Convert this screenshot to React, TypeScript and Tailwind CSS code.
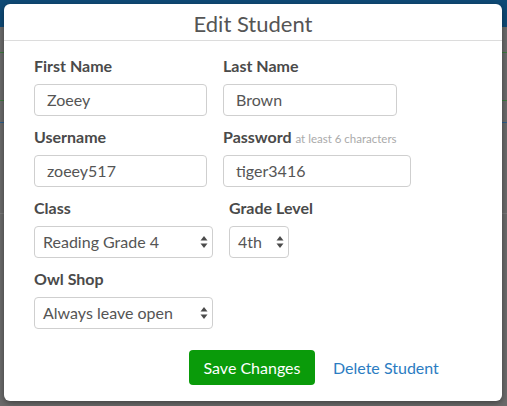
import React from "react";

function Arrows() {
  return (
    <svg width="8" height="14" viewBox="0 0 8 14" className="shrink-0">
      <path d="M4 1 L7.5 5.5 L0.5 5.5 Z" fill="#4a4a4a" />
      <path d="M4 13 L7.5 8.5 L0.5 8.5 Z" fill="#4a4a4a" />
    </svg>
  );
}

function Label({ children }: { children: React.ReactNode }) {
  return (
    <div className="h-5 leading-5 text-[16px] font-bold text-[#4a4a4a] whitespace-nowrap">
      {children}
    </div>
  );
}

function Input({ value, w }: { value: string; w: string }) {
  return (
    <div
      className={`${w} h-8 mt-2 rounded-[4px] border border-[#cfcfcf] bg-white flex items-center pl-3 text-[16px] text-[#555]`}
    >
      {value}
    </div>
  );
}

function Select({ value, w }: { value: string; w: string }) {
  return (
    <div
      className={`${w} h-8 mt-2 rounded-[4px] border border-[#cfcfcf] bg-white flex items-center justify-between pl-[8px] pr-[4px] text-[16px] text-[#555]`}
    >
      <span>{value}</span>
      <Arrows />
    </div>
  );
}

export default function App() {
  return (
    <div
      className="relative w-[507px] h-[406px] overflow-hidden bg-[#6b6b6b]"
      style={{ fontFamily: "Lato, 'Open Sans', sans-serif" }}
    >
      {/* dimmed page behind */}
      <div className="h-[27px] bg-[#0f4a76]" />
      <div className="flex flex-col">
        <div className="h-[26px] border-b border-[#3d7a3d]" />
        <div className="h-[48px] border-b border-[#3d7a3d]" />
        <div className="h-[22px] border-b border-[#2d5f8d]" />
        <div className="h-[91px] border-b border-[#7a7a7a]" />
      </div>

      {/* modal */}
      <div className="absolute left-[4px] top-[4px] w-[498px] h-[397px] rounded-[6px] bg-white shadow-[0_2px_6px_rgba(0,0,0,0.4)] flex flex-col">
        <div className="h-[37px] border-b border-[#dcdcdc] flex items-center justify-center text-[22px] text-[#555] pt-[3px]">
          Edit Student
        </div>
        <div className="pl-[30px] pt-[15px] flex flex-col">
          <div className="flex gap-4">
            <div className="flex flex-col">
              <Label>First Name</Label>
              <Input value="Zoeey" w="w-[173px]" />
            </div>
            <div className="flex flex-col">
              <Label>Last Name</Label>
              <Input value="Brown" w="w-[174px]" />
            </div>
          </div>
          <div className="flex gap-4 mt-[11px]">
            <div className="flex flex-col">
              <Label>Username</Label>
              <Input value="zoeey517" w="w-[173px]" />
            </div>
            <div className="flex flex-col">
              <Label>
                Password{" "}
                <span className="text-[11.5px] font-normal text-[#aaa]">at least 6 characters</span>
              </Label>
              <Input value="tiger3416" w="w-[188px]" />
            </div>
          </div>
          <div className="flex gap-4 mt-[11px]">
            <div className="flex flex-col">
              <Label>Class</Label>
              <Select value="Reading Grade 4" w="w-[179px]" />
            </div>
            <div className="flex flex-col">
              <Label>Grade Level</Label>
              <Select value="4th" w="w-[60px]" />
            </div>
          </div>
          <div className="flex flex-col mt-[11px]">
            <Label>Owl Shop</Label>
            <Select value="Always leave open" w="w-[179px]" />
          </div>
          <div className="flex items-center mt-[21px] pl-[155px]">
            <div className="w-[126px] h-[35px] rounded-[4px] bg-[#0a9b0a] text-white text-[16px] flex items-center justify-center">
              Save Changes
            </div>
            <div className="ml-[18px] text-[16px] text-[#2b7cc2]">Delete Student</div>
          </div>
        </div>
      </div>
    </div>
  );
}
